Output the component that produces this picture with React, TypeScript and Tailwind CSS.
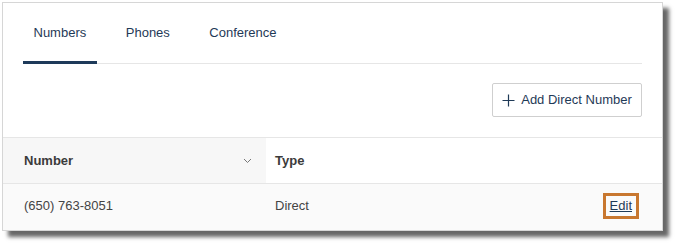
import React from "react";

export default function App() {
  const font = { fontFamily: '"Liberation Sans", Arial, sans-serif' };
  return (
    <div className="w-[679px] h-[249px] bg-white pt-[2px] pl-[2px] overflow-hidden" style={font}>
      <div className="w-[661px] h-[229px] border border-[#d6d6d6] bg-white shadow-[6px_6px_4px_rgba(0,0,0,0.6)] flex flex-col">
        {/* Tabs */}
        <div className="mx-[20px] h-[61px] border-b border-[#e6e6e6] flex items-stretch gap-[18.5px] shrink-0">
          <div className="relative px-[10.5px] flex items-center text-[13px] text-[#1f3a57]">
            <span>Numbers</span>
            <div className="absolute left-0 right-0 -bottom-[1px] h-[3px] bg-[#1e3a5a]" />
          </div>
          <div className="px-[10.5px] flex items-center text-[13px] text-[#1f3a57]">
            <span>Phones</span>
          </div>
          <div className="px-[10.5px] flex items-center text-[13px] text-[#1f3a57]">
            <span>Conference</span>
          </div>
        </div>

        {/* Action */}
        <div className="flex justify-end pr-[20px] pt-[19px] pb-[20px] shrink-0">
          <button className="h-[34px] w-[150px] border border-[#cfcfcf] rounded-[2px] bg-white flex items-center justify-center gap-[6px] text-[13px] text-[#1f3a57]">
            <svg width="13" height="13" viewBox="0 0 13 13" className="shrink-0">
              <path d="M6.5 0.5V12.5M0.5 6.5H12.5" stroke="#1f3a57" strokeWidth="1.2" fill="none" />
            </svg>
            <span>Add Direct Number</span>
          </button>
        </div>

        {/* Table header */}
        <div className="flex h-[47px] border-t border-b border-[#e6e6e6] shrink-0">
          <div className="w-[263px] bg-[#f7f7f7] flex items-center justify-between pl-[21px] pr-[14px] text-[13px] font-bold text-[#3b3b3b]">
            <span>Number</span>
            <svg width="9" height="6" viewBox="0 0 9 6">
              <path d="M1 1L4.5 4.5L8 1" stroke="#777" strokeWidth="1" fill="none" />
            </svg>
          </div>
          <div className="flex-1 bg-white flex items-center pl-[9px] text-[13px] font-bold text-[#3b3b3b]">
            <span>Type</span>
          </div>
        </div>

        {/* Row */}
        <div className="flex flex-1 bg-[#fafafa] text-[13px] text-[#444] pb-[3px]">
          <div className="w-[263px] flex items-center pl-[21px]">
            <span>(650) 763-8051</span>
          </div>
          <div className="flex-1 flex items-center justify-between pl-[9px] pr-[23px]">
            <span>Direct</span>
            <span className="border-[3px] border-[#c8772f] px-[4px] h-[26px] flex items-center text-[#1f3a57] underline">
              Edit
            </span>
          </div>
        </div>
      </div>
    </div>
  );
}
